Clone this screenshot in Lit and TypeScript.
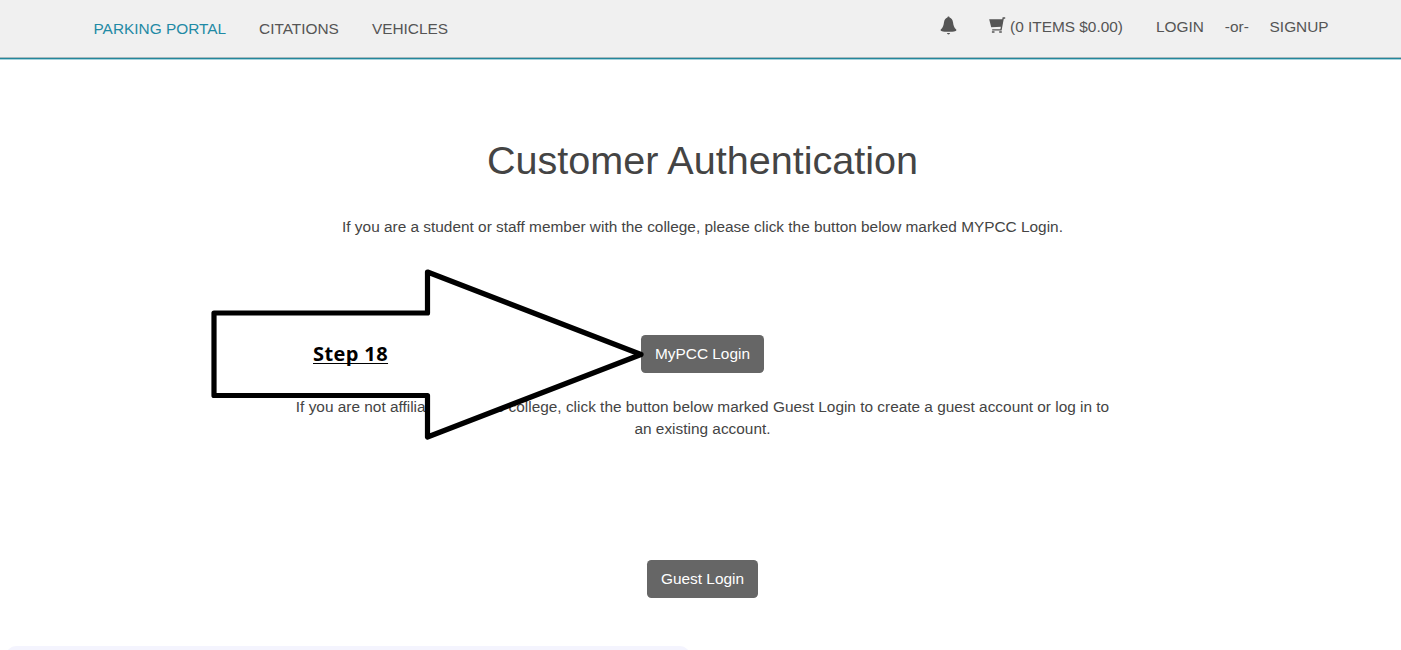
import { LitElement, html, css } from "lit";
import { customElement } from "lit/decorators.js";

@customElement("app-root")
export class AppRoot extends LitElement {
  static styles = css`
    :host {
      display: block;
      position: relative;
      height: 650px;
      overflow: hidden;
      background: #fff;
      color: #444;
      font-family: "Liberation Sans", Arial, sans-serif;
      font-size: 15.4px;
      line-height: 22px;
    }
    .bar {
      display: flex;
      justify-content: space-between;
      height: 57px;
      padding: 0 72.4px 0 93.5px;
      background: #f0f0f0;
      border-bottom: 1px solid #a9b9bd;
      box-shadow: 0 1px #23879c, 0 2px #a8d3dc;
      color: #555;
    }
    .links,
    .tools {
      display: flex;
      white-space: nowrap;
    }
    .links {
      gap: 33px;
      padding-top: 18px;
    }
    .tools {
      padding-top: 16px;
    }
    .active {
      color: #1f8aa5;
    }
    .bell {
      width: 17px;
      height: 19px;
      margin-right: 32px;
    }
    .cart {
      width: 17px;
      height: 17px;
      margin: 1px 4px 0 0;
    }
    .login {
      margin-left: 33px;
    }
    .or {
      margin: 0 20.8px 0 21px;
    }
    main {
      display: flex;
      flex-direction: column;
      align-items: center;
      padding-left: 4px;
      text-align: center;
    }
    h1 {
      margin: 80px 0 0;
      font-size: 39.6px;
      font-weight: 400;
      line-height: 44px;
    }
    p {
      margin: 34px 0 0;
    }
    .guest {
      width: 825px;
      margin-top: 23px;
    }
    .btn {
      box-sizing: border-box;
      height: 38px;
      padding: 8px 14.3px;
      border: 0;
      border-radius: 4.4px;
      background: #666;
      color: #fff;
      font: inherit;
    }
    .first {
      margin-top: 97px;
    }
    .second {
      margin-top: 120px;
    }
    .panel {
      width: 684px;
      height: 40px;
      margin: 48px 0 0 6px;
      border-radius: 10px;
      background: #f4f4fe;
    }
    .arrow {
      position: absolute;
      left: 208px;
      top: 266px;
      width: 440px;
      height: 176px;
    }
    .step {
      position: absolute;
      left: 313px;
      top: 340px;
      color: #000;
      font: 700 20px/28px "Open Sans", "Noto Sans", sans-serif;
      letter-spacing: 0.4px;
      text-decoration: underline;
      text-decoration-thickness: 1px;
      text-underline-offset: 2px;
      text-decoration-skip-ink: none;
      white-space: nowrap;
    }
  `;

  render() {
    return html`
      <header class="bar">
        <nav class="links">
          <span class="active">PARKING PORTAL</span>
          <span>CITATIONS</span>
          <span>VEHICLES</span>
        </nav>
        <div class="tools">
          <svg class="bell" viewBox="0 0 17 19" fill="#555">
            <path d="M8.500 .4c.7 0 1 .5 1.100 1.200 2 .6 3 2.200 3.400 4.600.5 3.200.9 5.300 3.200 7.300.5.500.1 1.200-.6 1.400-3.900 1.200-10.300 1.200-14.200 0-.7-.2-1.100-.9-.6-1.400 2.300-2 2.700-4.100 3.200-7.300.4-2.400 1.400-4 3.400-4.600C7.500.900 7.800.400 8.500.400zM6.900 17.100h3.200c-.3.900-.8 1.300-1.600 1.300s-1.300-.4-1.600-1.300z"/>
          </svg>
          <svg class="cart" viewBox="0 0 17 17" fill="none" stroke="#555">
            <path d="M.2 2.200H14L12.500 9.800 2.200 10.200z" fill="#555" stroke="none"/>
            <path d="M16.200 1H14.200L12 12.900H3.200" stroke-width="1.400"/>
            <path d="M2.900 15h2.600M10.200 15h2.600" stroke-width="1.500"/>
          </svg>
          <span>(0 ITEMS $0.00)</span>
          <span class="login">LOGIN</span>
          <span class="or">-or-</span>
          <span>SIGNUP</span>
        </div>
      </header>
      <main>
        <h1>Customer Authentication</h1>
        <p>If you are a student or staff member with the college, please click the button below marked MYPCC Login.</p>
        <button class="btn first">MyPCC Login</button>
        <p class="guest">If you are not affiliated with the college, click the button below marked Guest Login to create a guest account or log in to an existing account.</p>
        <button class="btn second">Guest Login</button>
      </main>
      <div class="panel"></div>
      <svg class="arrow" viewBox="208 266 440 176">
        <path d="M214 313H427.500V272L641 354.500 427.500 437V395.500H214z" fill="#fff" stroke="#000" stroke-width="5.200" stroke-linejoin="round"/>
      </svg>
      <span class="step">Step 18</span>
    `;
  }
}
